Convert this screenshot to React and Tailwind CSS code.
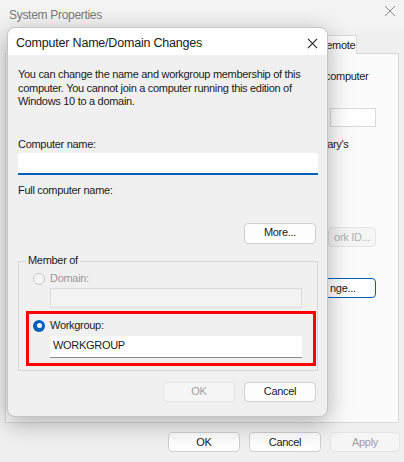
const font = { fontFamily: '"Liberation Sans", Arial, sans-serif' }

function Button({ children, disabled, className = '' }) {
  return (
    <div
      className={`flex items-center justify-center rounded-[4px] border text-[11px] ${
        disabled ? 'border-[#e5e5e5] bg-[#f5f5f5] text-[#a0a0a0]' : 'border-[#d0d0d0] bg-[#fdfdfd] text-[#1a1a1a]'
      } ${className}`}
    >
      {children}
    </div>
  )
}

function Radio({ checked, disabled }) {
  if (checked) {
    return (
      <span className="flex h-[12px] w-[12px] shrink-0 items-center justify-center rounded-full bg-[#005fb8]">
        <span className="h-[5px] w-[5px] rounded-full bg-white" />
      </span>
    )
  }
  return (
    <span
      className={`h-[12px] w-[12px] shrink-0 rounded-full border ${disabled ? 'border-[#c8c8c8] bg-[#f3f3f3]' : 'border-[#8a8a8a] bg-white'}`}
    />
  )
}

export default function App() {
  return (
    <div className="relative h-[462px] w-[404px] overflow-hidden bg-[#f0f0f0] tracking-[-0.3px]" style={font}>
      {/* System Properties (background window) */}
      <div className="flex h-[30px] items-center justify-between bg-[#f3f3f3] pl-[9px] pr-[8px]">
        <span className="text-[12px] text-[#7a7a7a]">System Properties</span>
        <svg width="12" height="12" viewBox="0 0 12 12" className="mt-[-8px]">
          <path d="M1 1 L11 11 M11 1 L1 11" stroke="#8a8a8a" strokeWidth="1" />
        </svg>
      </div>
      <div className="flex h-[24px] items-end pl-[5px]">
        <div className="ml-[312px] flex h-[19px] w-[40px] items-center justify-center border border-b-0 border-[#d9d9d9] bg-[#fbfbfb] text-[11px] text-[#1a1a1a]">
          Remote
        </div>
      </div>
      <div className="mx-[5px] -mt-px h-[370px] border border-[#d9d9d9] bg-[#fbfbfb] pl-[319px] pt-[14px] text-[11px] text-[#1a1a1a]">
        <div className="h-[40px]">computer</div>
        <div className="ml-[5px] h-[19px] w-[46px] border border-[#d9d9d9] bg-white" />
        <div className="mt-[9px] h-[91px]">lary's</div>
        <Button disabled className="ml-[3px] h-[20px] w-[48px] text-[#b0b0b0]">ork ID...</Button>
        <div className="h-[31px]" />
        <div className="flex h-[20px] w-[51px] items-center rounded-[4px] border border-[#005fb8] bg-white pl-[4px]">nge...</div>
      </div>
      <div className="flex justify-end gap-[9px] pr-[4px] pt-[9px]">
        <Button className="h-[20px] w-[72px]">OK</Button>
        <Button className="h-[20px] w-[72px]">Cancel</Button>
        <Button disabled className="h-[20px] w-[70px]">Apply</Button>
      </div>

      {/* Computer Name/Domain Changes dialog */}
      <div className="absolute left-[7px] top-[27px] flex h-[390px] w-[321px] flex-col overflow-hidden rounded-[8px] border border-[#c4c4c4] bg-[#f0f0f0] shadow-[0_6px_24px_rgba(0,0,0,0.3)]">
        <div className="flex h-[27px] shrink-0 items-center justify-between bg-white pl-[8px] pr-[9px] pt-[4px]">
          <span className="text-[12.5px] tracking-[-0.2px] text-[#1a1a1a]">Computer Name/Domain Changes</span>
          <svg width="11" height="11" viewBox="0 0 12 12">
            <path d="M1 1 L11 11 M11 1 L1 11" stroke="#1a1a1a" strokeWidth="1.1" />
          </svg>
        </div>
        <div className="flex flex-col px-[10px] pt-[13px] text-[11px] leading-[13.5px] text-[#1a1a1a]">
          <p>
            You can change the name and workgroup membership of this computer. You cannot join a computer running this edition of Windows 10 to a domain.
          </p>
          <div className="mt-[29px]">Computer name:</div>
          <div className="mt-[2px] h-[22px] w-[300px] rounded-t-[3px] border-b-2 border-[#005fb8] bg-white" />
          <div className="mt-[9px]">Full computer name:</div>
          <div className="mt-[25px] flex justify-end pr-[1px]">
            <Button className="h-[21px] w-[72px]">More...</Button>
          </div>
          <div className="relative mt-[17px] h-[110px] w-[300px] border border-[#d6d6d6] pt-[10px]">
            <span className="absolute left-[7px] top-[-8px] bg-[#f0f0f0] px-[2px]">Member of</span>
            <div className="flex h-[14px] items-center gap-[5px] pl-[14px] text-[#9a9a9a]">
              <Radio disabled />
              <span>Domain:</span>
            </div>
            <div className="ml-[31px] mt-[2px] h-[20px] w-[252px] border border-[#dcdcdc] bg-[#f3f3f3]" />
            <div className="ml-[7px] mt-[3px] h-[55px] w-[290px] border-[3px] border-[#ff0000] pt-[5px]">
              <div className="flex h-[14px] items-center gap-[5px] pl-[4px]">
                <Radio checked />
                <span>Workgroup:</span>
              </div>
              <div className="ml-[21px] mt-[3px] flex h-[22px] w-[252px] items-center border-b border-[#8a8a8a] bg-white pl-[3px]">
                WORKGROUP
              </div>
            </div>
          </div>
          <div className="mt-[11px] flex justify-end gap-[9px] pr-[1px]">
            <Button disabled className="h-[20px] w-[72px]">OK</Button>
            <Button className="h-[20px] w-[72px]">Cancel</Button>
          </div>
        </div>
      </div>
    </div>
  )
}
